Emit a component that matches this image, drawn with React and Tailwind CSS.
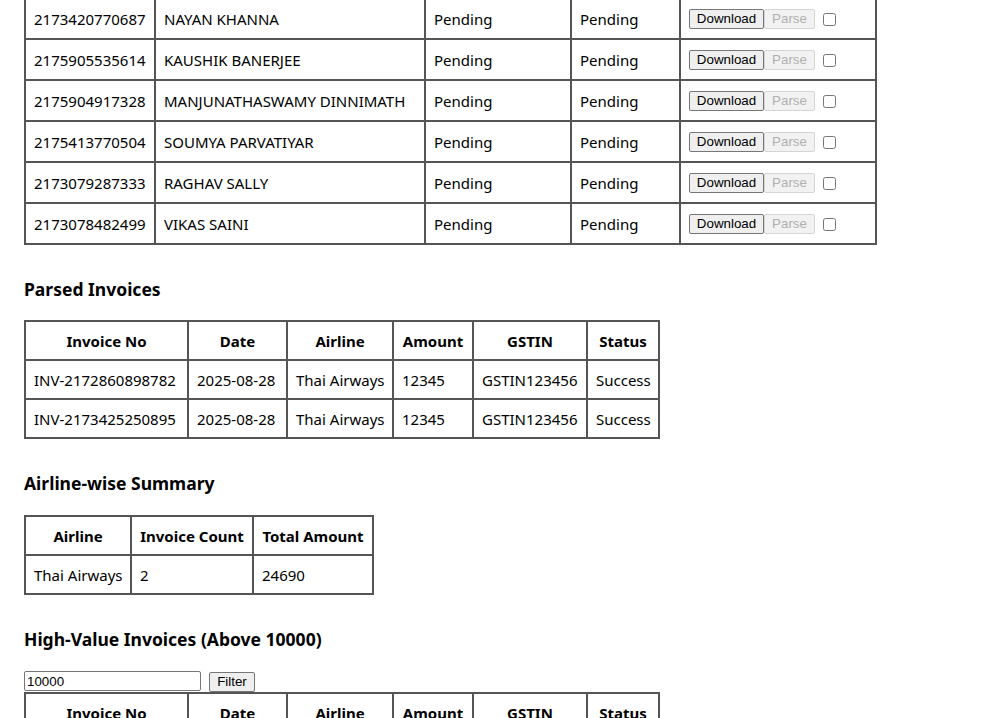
const pending = [
  ["2173420770687", "NAYAN KHANNA"],
  ["2175905535614", "KAUSHIK BANERJEE"],
  ["2175904917328", "MANJUNATHASWAMY DINNIMATH"],
  ["2175413770504", "SOUMYA PARVATIYAR"],
  ["2173079287333", "RAGHAV SALLY"],
  ["2173078482499", "VIKAS SAINI"],
];

const parsed = [
  ["INV-2172860898782", "2025-08-28", "Thai Airways", "12345", "GSTIN123456", "Success"],
  ["INV-2173425250895", "2025-08-28", "Thai Airways", "12345", "GSTIN123456", "Success"],
];

const invoiceCols = ["w-[163px]", "w-[99px]", "w-[106px]", "w-[80px]", "w-[114px]", "w-[72px]"];
const invoiceHeads = ["Invoice No", "Date", "Airline", "Amount", "GSTIN", "Status"];

const cell = "border-2 border-[#555] px-2 pt-[9px] pb-[7px] text-left align-top whitespace-nowrap overflow-hidden";
const head = "border-2 border-[#555] px-2 pt-[9px] pb-[7px] text-center font-bold align-top whitespace-nowrap overflow-hidden";
const btnFont = { fontFamily: '"Liberation Sans", Arial, sans-serif' };

function Heading({ children, className = "mb-[19px]" }) {
  return (
    <h3 className={"text-[17.5px] font-bold leading-[25px] mt-[32px] " + className}>
      {children}
    </h3>
  );
}

function InvoiceTable({ rows }) {
  return (
    <table className="table-fixed border-collapse w-[636px] leading-[21px]">
      <colgroup>
        {invoiceCols.map((c, i) => (
          <col key={i} className={c} />
        ))}
      </colgroup>
      <thead>
        <tr>
          {invoiceHeads.map((h) => (
            <th key={h} className={head}>{h}</th>
          ))}
        </tr>
      </thead>
      <tbody>
        {rows.map((r) => (
          <tr key={r[0]}>
            {r.map((v, i) => (
              <td key={i} className={cell}>{v}</td>
            ))}
          </tr>
        ))}
      </tbody>
    </table>
  );
}

export default function App() {
  return (
    <div className="min-h-screen bg-white text-black text-[15px] px-6 overflow-hidden" style={{ fontFamily: '"Noto Sans", "Open Sans", sans-serif' }}>
      {/* Pending downloads */}
      <table className="table-fixed border-collapse w-[853px] leading-[23px] -mt-[3px]">
        <colgroup>
          <col className="w-[130px]" />
          <col className="w-[270px]" />
          <col className="w-[146px]" />
          <col className="w-[109px]" />
          <col className="w-[196px]" />
        </colgroup>
        <tbody>
          {pending.map(([id, name]) => (
            <tr key={id}>
              <td className={cell}>{id}</td>
              <td className={cell}>{name}</td>
              <td className={cell}>Pending</td>
              <td className={cell}>Pending</td>
              <td className="border-2 border-[#555] px-2 py-2 align-top">
                <div className="flex items-start h-[23px]">
                  <button className="mt-[2px] w-[75px] h-[20px] text-[13.33px] leading-none border border-[#767676] rounded-[2px] bg-[#efefef] text-black" style={btnFont}>
                    Download
                  </button>
                  <button disabled className="mt-[2px] w-[51px] h-[20px] text-[13.33px] leading-none border border-[#d4d4d4] rounded-[2px] bg-[#f2f2f2] text-[#b0b0b0]" style={btnFont}>
                    Parse
                  </button>
                  <input type="checkbox" className="ml-[8px] mt-[6px] w-[13px] h-[13px]" />
                </div>
              </td>
            </tr>
          ))}
        </tbody>
      </table>

      <Heading className="mb-[18px]">Parsed Invoices</Heading>
      <InvoiceTable rows={parsed} />

      <Heading>Airline-wise Summary</Heading>
      <table className="table-fixed border-collapse w-[350px] leading-[21px]">
        <colgroup>
          <col className="w-[106px]" />
          <col className="w-[122px]" />
          <col className="w-[120px]" />
        </colgroup>
        <thead>
          <tr>
            <th className={head}>Airline</th>
            <th className={head}>Invoice Count</th>
            <th className={head}>Total Amount</th>
          </tr>
        </thead>
        <tbody>
          <tr>
            <td className={cell}>Thai Airways</td>
            <td className={cell}>2</td>
            <td className={cell}>24690</td>
          </tr>
        </tbody>
      </table>

      <Heading>High-Value Invoices (Above 10000)</Heading>
      <div className="flex items-start gap-2 h-[21px] mt-[5px]">
        <input
          type="text"
          defaultValue="10000"
          className="w-[177px] h-[20px] px-[2px] text-[13.33px] border border-[#767676] rounded-[2px] outline-none"
          style={btnFont}
        />
        <button className="mt-px w-[46px] h-[20px] text-[13.33px] leading-none border border-[#767676] rounded-[2px] bg-[#efefef]" style={btnFont}>
          Filter
        </button>
      </div>
      <InvoiceTable rows={parsed} />
    </div>
  );
}
